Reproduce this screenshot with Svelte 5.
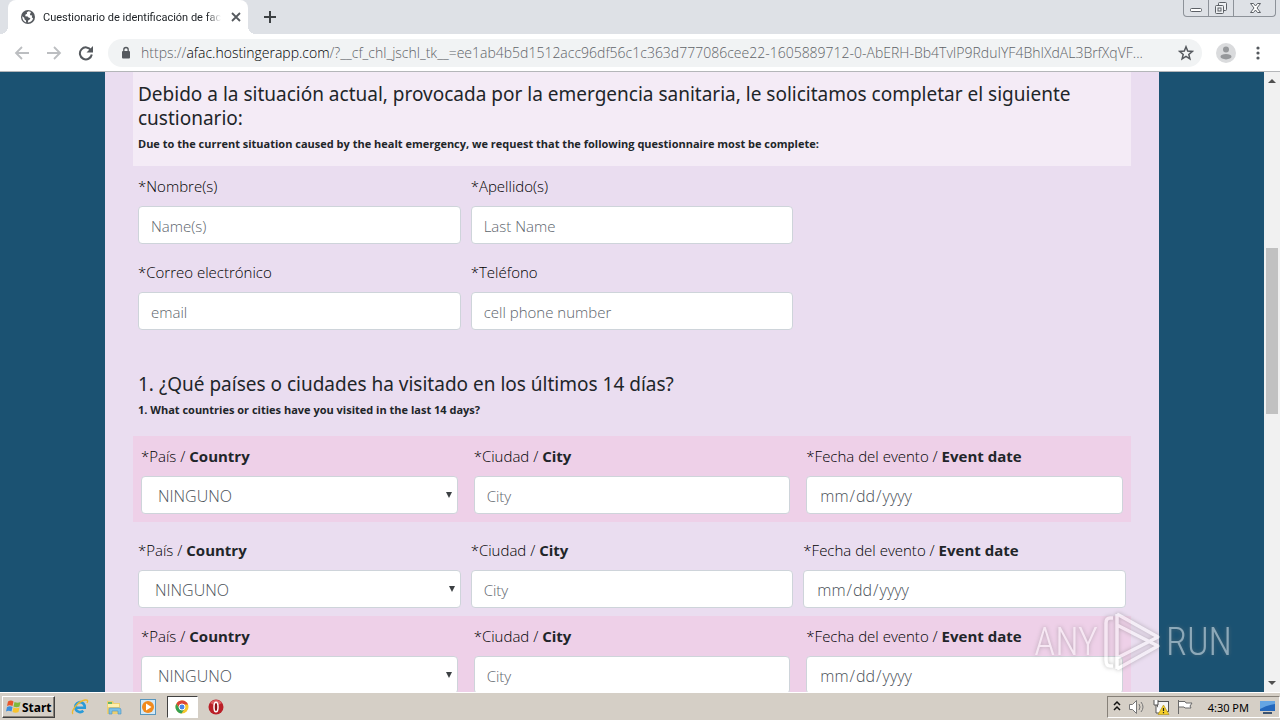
<script>
  const url = {
    scheme: 'https://',
    host: 'afac.hostingerapp.com',
    rest: '/?__cf_chl_jschl_tk__=ee1ab4b5d1512acc96df56c1c363d777086cee22-1605889712-0-AbERH-Bb4TvIP9RduIYF4BhIXdAL3BrfXqVF...'
  };

  const people = [
    { id: 'name', label: '*Nombre(s)', hint: 'Name(s)', type: 'text' },
    { id: 'last', label: '*Apellido(s)', hint: 'Last Name', type: 'text' },
    { id: 'email', label: '*Correo electrónico', hint: 'email', type: 'email' },
    { id: 'phone', label: '*Teléfono', hint: 'cell phone number', type: 'tel' }
  ];

  let visits = $state([
    { id: 1, country: 'NINGUNO', city: '', date: '' },
    { id: 2, country: 'NINGUNO', city: '', date: '' },
    { id: 3, country: 'NINGUNO', city: '', date: '' }
  ]);
</script>

<div class="screen">
  <header class="tabs">
    <div class="tab">
      <svg viewBox="0 0 16 16" width="16" height="16">
        <circle cx="8" cy="8" r="7" fill="#55595e" />
        <path d="M8.5 2.2 6.7 3.6l.4 1.2-1.6.8-.3 1.6 2.4.3 1.2 1.3 1.6.2-.6 1.6-1.5.7-.5 2.3c2.2-.3 4.6-1.7 5.3-4.2l-1.3-1.1.4-1.7-1.9-.3-.5-1.6 1.2-.8-.6-1.2zM2.2 7.300l2 1.500.4 1.700 1.400 1 .1 1.900C3.800 12.600 2.100 10.300 2.200 7.300z" fill="#fff" />
      </svg>
      <span class="title">Cuestionario de identificación de fac</span>
      <button class="plain" aria-label="Close tab">
        <svg viewBox="0 0 16 16" width="16" height="16"><path d="M4 4l8 8M12 4l-8 8" stroke="#55595e" stroke-width="1.8" /></svg>
      </button>
    </div>
    <button class="plain add" aria-label="New tab">
      <svg viewBox="0 0 16 16" width="16" height="16"><path d="M8 2v12M2 8h12" stroke="#3c4043" stroke-width="2" /></svg>
    </button>
    <div class="window-buttons">
      <button aria-label="Minimize">
        <svg viewBox="0 0 24 16" width="24" height="16"><rect x="6.5" y="8.5" width="11" height="3" rx="1" fill="#fff" stroke="#5c6066" /></svg>
      </button>
      <button aria-label="Restore">
        <svg viewBox="0 0 24 16" width="24" height="16" fill="#eef0f3" stroke="#5c6066"><rect x="9.5" y="2.5" width="8" height="8" rx="1" /><rect x="6.5" y="5.5" width="8" height="8" rx="1" /><rect x="9" y="8" width="3" height="3" /></svg>
      </button>
      <button class="wide" aria-label="Close">
        <svg viewBox="0 0 24 16" width="24" height="16"><path d="M7.5 3.5h3l2 2.5 2-2.5h3L14 8l3.500 4.500h-3l-2-2.500-2 2.500h-3L11 8z" fill="#fff" stroke="#5c6066" /></svg>
      </button>
    </div>
  </header>

  <div class="toolbar">
    <nav>
      <button class="plain" aria-label="Back">
        <svg viewBox="0 0 16 16" width="16" height="16"><path d="M15 8H2M8 2L2 8l6 6" fill="none" stroke="#bcbec1" stroke-width="1.8" /></svg>
      </button>
      <button class="plain" aria-label="Forward">
        <svg viewBox="0 0 16 16" width="16" height="16"><path d="M1 8h13M8 2l6 6-6 6" fill="none" stroke="#bcbec1" stroke-width="1.8" /></svg>
      </button>
      <button class="plain" aria-label="Reload">
        <svg viewBox="0 0 16 16" width="16" height="16"><path d="M13 5.2A6 6 0 1 0 13.8 9.5" fill="none" stroke="#55595e" stroke-width="2" /><path d="M15 1v6.500H8.500z" fill="#55595e" /></svg>
      </button>
    </nav>
    <div class="omnibox">
      <svg viewBox="0 0 10 14" width="10" height="14"><rect x="1" y="5" width="8" height="7.5" rx="1" fill="#55595e" /><path d="M2.8 5.5V3.7a2.2 2.2 0 0 1 4.4 0v1.8" fill="none" stroke="#55595e" stroke-width="1.3" /></svg>
      <span class="url">{url.scheme}<b>{url.host}</b>{url.rest}</span>
      <button class="plain" aria-label="Bookmark">
        <svg viewBox="0 0 16 16" width="16" height="16"><path d="M8 1.8l1.7 4.3 4.6.3-3.5 3 1.1 4.5L8 11.400l-3.900 2.500 1.100-4.500-3.500-3 4.600-.3z" fill="none" stroke="#55595e" stroke-width="1.5" /></svg>
      </button>
    </div>
    <button class="plain" aria-label="Profile">
      <svg viewBox="0 0 20 20" width="20" height="20"><circle cx="10" cy="10" r="10" fill="#dadbdd" /><circle cx="10" cy="6.5" r="3" fill="#96989b" /><ellipse cx="10" cy="13.7" rx="5.5" ry="2.7" fill="#96989b" /></svg>
    </button>
    <button class="plain" aria-label="Menu">
      <svg viewBox="0 0 16 16" width="16" height="16" fill="#55595e"><circle cx="8" cy="3" r="1.6" /><circle cx="8" cy="8" r="1.6" /><circle cx="8" cy="13" r="1.6" /></svg>
    </button>
  </div>

  <div class="viewport">
    <main>
      <form>
        <section class="intro">
          <h2>Debido a la situación actual, provocada por la emergencia sanitaria, le solicitamos completar el siguiente custionario:</h2>
          <p class="english">Due to the current situation caused by the healt emergency, we request that the following questionnaire most be complete:</p>
        </section>

        <section class="people">
          {#each people as field (field.id)}
            <div class="field">
              <label for={field.id}>{field.label}</label>
              <input id={field.id} type={field.type} placeholder={field.hint} />
            </div>
          {/each}
        </section>

        <section class="question">
          <h2>1. ¿Qué países o ciudades ha visitado en los últimos 14 días?</h2>
          <p class="english">1. What countries or cities have you visited in the last 14 days?</p>
        </section>

        {#each visits as visit, index (visit.id)}
          <section class="visit" class:pink={index % 2 === 0}>
            <div class="field">
              <label for="country{visit.id}">*País / <strong>Country</strong></label>
              <div class="select">
                <select id="country{visit.id}" bind:value={visit.country}>
                  <option>NINGUNO</option>
                </select>
                <svg viewBox="0 0 6 6" width="6" height="6"><path d="M0 0h6L3 6z" fill="#3c4043" /></svg>
              </div>
            </div>
            <div class="field">
              <label for="city{visit.id}">*Ciudad / <strong>City</strong></label>
              <input id="city{visit.id}" type="text" placeholder="City" bind:value={visit.city} />
            </div>
            <div class="field">
              <label for="date{visit.id}">*Fecha del evento / <strong>Event date</strong></label>
              <input id="date{visit.id}" type="date" bind:value={visit.date} />
            </div>
          </section>
        {/each}
      </form>
    </main>
    <div class="scrollbar">
      <svg viewBox="0 0 16 16" width="16" height="16"><path d="M4 11l4-4 4 4z" fill="#505050" /></svg>
      <div class="track"><div class="thumb"></div></div>
      <svg viewBox="0 0 16 16" width="16" height="16"><path d="M4 5h8l-4 4z" fill="#505050" /></svg>
    </div>
    <div class="watermark">
      <span>ANY</span>
      <svg viewBox="0 0 60 64" width="60" height="64" fill="none" stroke="#fff" stroke-width="3.5" stroke-linejoin="round">
        <path d="M11 8H8q-4 0-4 5v37q0 6 4 6h3" />
        <path d="M15 4v55M15 4l41 23-41 21M15 59l41-23-41-21" />
      </svg>
      <span>RUN</span>
    </div>
  </div>

  <footer class="taskbar">
    <button class="start">
      <svg viewBox="0 0 16 16" width="16" height="16"><path d="M3 2.500q3-2 5.500 0L7.500 7q-3-1.500-5.500 0z" fill="#e8562b" /><path d="M9.500 3q3 1.500 6 0L14.500 7.500q-3 1.500-6 0z" fill="#7fb83c" /><path d="M2 8q3-1.500 5.500 0L6.500 12.500q-3-1.500-5.500 0z" fill="#3b8ede" /><path d="M8.500 8.500q3 1.500 6 0l-1 4.500q-3 1.500-6 0z" fill="#f8c32c" /></svg>
      Start
    </button>
    <div class="apps">
      <button aria-label="Internet Explorer">
        <svg viewBox="0 0 18 18" width="18" height="18" fill="none"><path d="M4.500 9.700h9.300a4.800 5 0 1 0-1.500 3.100" stroke="#2a9bd8" stroke-width="2.600" /><path d="M2 16C-1 14 7 3 14 2q4-.5 2 3" stroke="#edb92e" stroke-width="1.400" /></svg>
      </button>
      <button aria-label="Explorer">
        <svg viewBox="0 0 18 18" width="18" height="18"><path d="M2 3h6l1 2h6v11H2z" fill="#edcf72" /><path d="M3 4h4v2H3z" fill="#66b666" /><path d="M3 6h11v3H3z" fill="#fff0ad" /><path d="M4 16V11q0-1 1-1h9q2 0 2 2v4h-3v-3H7v3z" fill="#79c0e8" stroke="#4a91bd" stroke-width=".6" /></svg>
      </button>
      <button aria-label="Media Player">
        <svg viewBox="0 0 18 18" width="18" height="18"><rect x="1.5" y="1.5" width="15" height="15" fill="#d3e9f7" stroke="#5796bd" /><circle cx="9" cy="9" r="6" fill="#f18a1d" /><path d="M7 5.500v7L12.500 9z" fill="#fff" /></svg>
      </button>
      <button class="active" aria-label="Chrome">
        <svg viewBox="0 0 16 16" width="16" height="16"><circle cx="8" cy="8" r="6.5" fill="#f6c72d" /><path d="M2.400 4.700A6.500 6.500 0 0 1 14 5.500H8L5.500 9z" fill="#db4437" /><path d="M2.400 4.700A6.500 6.500 0 0 0 7.500 14.500L10 10.500 5.500 9.500z" fill="#34a052" /><circle cx="8" cy="8" r="3" fill="#4b87e8" stroke="#fff" /></svg>
      </button>
      <button aria-label="Opera">
        <svg viewBox="0 0 18 18" width="18" height="18"><circle cx="9" cy="9" r="7.5" fill="#ba1f27" /><path d="M3 5a7.500 7.500 0 0 1 12 0Q9 9 3 5z" fill="#dd5d62" /><ellipse cx="9" cy="9" rx="2" ry="4.8" fill="#8a0f15" stroke="#fff" stroke-width="1.5" /></svg>
      </button>
    </div>
    <div class="tray">
      <svg viewBox="0 0 10 16" width="10" height="16" fill="none" stroke="#111" stroke-width="1.5"><path d="M2 6l3-3 3 3M2 11l3-3 3 3" /></svg>
      <svg viewBox="0 0 18 16" width="18" height="16" fill="none" stroke="#777"><path d="M1.500 5.500h3l4-4v13l-4-4h-3z" fill="#fff" /><path d="M11 5q2 3 0 6M13 3q4 5 0 10" /></svg>
      <svg viewBox="0 0 18 16" width="18" height="16"><rect x="5.5" y="2.5" width="11" height="10" fill="#f4f4f4" stroke="#555" /><path d="M2 1v5h4V1M4 6v8h6" fill="#fff" stroke="#555" /><path d="M11.500 6L17 15.500H6z" fill="#f5cf2a" stroke="#a98a10" stroke-width=".6" /><path d="M11.500 9v3M11.500 13v1.200" stroke="#222" stroke-width="1.2" /></svg>
      <svg viewBox="0 0 18 16" width="18" height="16"><path d="M2.500 1v14M3 2.500h6l1 1.500h6l-2 3 1 2H9L8 8H3" fill="#fff" stroke="#6a6a6a" /></svg>
      <time>4:30 PM</time>
      <svg viewBox="0 0 16 16" width="16" height="16"><rect x="1" y="2" width="15" height="10" fill="#2468bd" /><path d="M1 2h15v3Q8 6 1 10z" fill="#65a5e3" /><path d="M4 13h9v2H4z" fill="#3c5370" /></svg>
    </div>
  </footer>
</div>

<style>
  :global(body) {
    overflow: hidden;
  }
  .screen {
    display: flex;
    flex-direction: column;
    height: 100vh;
    font-family: 'Open Sans', 'Noto Sans', sans-serif;
    color: #212529;
  }
  .screen * {
    box-sizing: border-box;
  }
  svg {
    display: block;
    flex: none;
  }
  button {
    font: inherit;
    color: inherit;
  }
  .plain {
    display: flex;
    flex: none;
    padding: 0;
    border: 0;
    background: none;
  }

  .tabs {
    display: flex;
    flex: none;
    height: 34px;
    padding: 0 4px 0 8px;
    background: #dee1e6;
  }
  .tab {
    position: relative;
    display: flex;
    align-items: center;
    gap: 7px;
    width: 240px;
    padding: 0 8px 0 12px;
    border-radius: 8px 8px 0 0;
    background: #fff;
  }
  .tab::before,
  .tab::after {
    content: '';
    position: absolute;
    bottom: 0;
    width: 8px;
    height: 8px;
  }
  .tab::before {
    right: 100%;
    background: radial-gradient(circle at 0 0, transparent 8px, #fff 8px);
  }
  .tab::after {
    left: 100%;
    background: radial-gradient(circle at 100% 0, transparent 8px, #fff 8px);
  }
  .title {
    flex: 1;
    white-space: nowrap;
    font-family: Roboto, sans-serif;
    font-size: 11px;
    mask-image: linear-gradient(to right, #000 92%, transparent);
  }
  .add {
    align-self: center;
    margin-left: 14px;
  }
  .window-buttons {
    display: flex;
    height: 17px;
    margin-left: auto;
    border: 1px solid #8d9299;
    border-top: 0;
    border-radius: 0 0 4px 4px;
  }
  .window-buttons button {
    display: flex;
    justify-content: center;
    width: 25px;
    padding: 0;
    border: 0;
    border-right: 1px solid #8d9299;
    background: none;
  }
  .window-buttons .wide {
    width: 41px;
    border-right: 0;
  }

  .toolbar {
    display: flex;
    flex: none;
    align-items: center;
    gap: 14px;
    height: 38px;
    padding: 0 14px;
    border-bottom: 1px solid #b4b6b9;
    background: #fff;
  }
  nav {
    display: flex;
    gap: 16px;
  }
  .omnibox {
    display: flex;
    flex: 1;
    align-items: center;
    gap: 10px;
    min-width: 0;
    height: 28px;
    padding: 0 8px 0 13px;
    border-radius: 14px;
    background: #f1f3f4;
  }
  .url {
    flex: 1;
    overflow: hidden;
    white-space: nowrap;
    font-size: 14px;
    font-weight: 300;
    color: #5f6368;
  }
  .url b {
    font-weight: 300;
    color: #000;
  }

  .viewport {
    position: relative;
    display: flex;
    flex: 1;
    min-height: 0;
    overflow: hidden;
    background: #1b5272;
  }
  main {
    flex: 1;
    padding: 0 105px;
  }
  form {
    padding: 0 28px;
    background: #eaddf0;
  }
  h2 {
    margin: 0 0 2px;
    font-family: 'Noto Sans', sans-serif;
    font-size: 19px;
    font-weight: 400;
    line-height: 24px;
  }
  .english {
    margin: 0;
    font-size: 11px;
    font-weight: 700;
    line-height: 24px;
  }
  .intro {
    padding: 10px 5px;
    background: #f4ebf6;
  }
  .people,
  .visit {
    display: grid;
    grid-template-columns: repeat(3, 1fr);
    gap: 16px 10px;
    padding: 8px 5px;
  }
  .people .field:nth-child(odd) {
    grid-column: 1;
  }
  .question {
    padding: 34px 5px 14px;
  }
  .visit {
    padding-top: 16px;
  }
  .visit.pink {
    column-gap: 16px;
    padding: 8px;
    background: #eed0e8;
  }
  .field {
    display: flex;
    flex-direction: column;
    gap: 8px;
    min-width: 0;
  }
  label {
    font-size: 15px;
    font-weight: 300;
    line-height: 24px;
    color: #000;
  }
  strong {
    font-weight: 700;
    color: #212529;
  }
  input,
  select {
    width: 100%;
    height: 38px;
    margin: 0;
    padding: 2px 12px 0;
    border: 1px solid #ced4da;
    border-radius: 4px;
    background: #fff;
    font: 300 15px/24px 'Open Sans', 'Noto Sans', sans-serif;
    color: #495057;
  }
  input::placeholder {
    color: #5c646c;
  }
  input[type='date'],
  select {
    font-size: 16px;
  }
  input::-webkit-calendar-picker-indicator {
    display: none;
  }
  .select {
    display: grid;
    align-items: center;
  }
  .select > :global(*) {
    grid-area: 1 / 1;
  }
  select {
    appearance: none;
    padding-left: 16px;
  }
  .select svg {
    justify-self: end;
    margin-right: 6px;
    pointer-events: none;
  }

  .scrollbar {
    display: flex;
    flex: none;
    flex-direction: column;
    width: 16px;
    background: #f1f1f1;
  }
  .track {
    flex: 1;
    display: grid;
    grid-template-rows: 160fr 166fr 262fr;
    padding: 0 2px;
  }
  .thumb {
    grid-row: 2;
    background: #c1c1c1;
  }

  .watermark {
    position: absolute;
    right: 48px;
    bottom: 18px;
    display: flex;
    align-items: center;
    gap: 4px;
    font-family: 'Roboto Condensed', 'Liberation Sans Narrow', 'Liberation Sans', sans-serif;
    font-size: 38px;
    font-weight: 300;
    color: #fff;
    opacity: 0.5;
    pointer-events: none;
    filter: drop-shadow(0 0 2px #777);
  }

  .taskbar {
    display: flex;
    flex: none;
    align-items: center;
    gap: 10px;
    height: 28px;
    padding: 1px 0 0 2px;
    border-top: 1px solid #fff;
    background: #d5cfc6;
    font-family: 'Noto Sans', sans-serif;
    font-size: 11px;
  }
  .start {
    display: flex;
    align-items: center;
    gap: 1px;
    height: 22px;
    padding: 0 2px;
    border: 1px solid;
    border-color: #fff #404040 #404040 #fff;
    background: #d5cfc6;
    box-shadow: inset -1px -1px #868078;
    font-size: 12px;
    font-weight: 700;
    color: #000;
  }
  .apps {
    display: flex;
    gap: 3px;
  }
  .apps button {
    display: flex;
    align-items: center;
    justify-content: center;
    width: 31px;
    height: 22px;
    padding: 0;
    border: 0;
    background: none;
  }
  .apps .active {
    border: 1px solid;
    border-color: #404040 #fff #fff #404040;
    background: #fff;
  }
  .tray {
    display: flex;
    align-items: center;
    gap: 6px;
    height: 22px;
    margin-left: auto;
    padding: 0 4px;
    border: 1px solid;
    border-color: #868078 #fff #fff #868078;
    color: #000;
  }
  time {
    margin: 0 4px 0 8px;
  }
</style>
